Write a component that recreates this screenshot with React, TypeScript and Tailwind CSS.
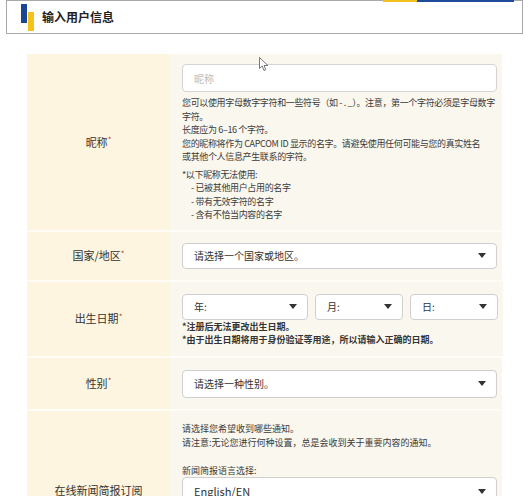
import React from 'react'

const font = { fontFamily: '"Noto Sans CJK SC", "Noto Sans", sans-serif' }

function Arrow() {
  return (
    <svg width="8" height="5" viewBox="0 0 8 5" className="shrink-0">
      <path d="M0 0 L8 0 L4 5 Z" fill="#333" />
    </svg>
  )
}

function Select({ text, className }: { text: string; className?: string }) {
  return (
    <div
      className={`flex items-center justify-between bg-white border border-[#cfcfcf] rounded-[4px] pl-[11px] pr-[10px] text-[10px] text-[#333] ${className ?? ''}`}
    >
      <span>{text}</span>
      <Arrow />
    </div>
  )
}

function Row({
  label,
  children,
  className,
}: {
  label: string
  children: React.ReactNode
  className?: string
}) {
  return (
    <div className={`flex border-b-2 border-[#fffcf6] ${className ?? ''}`}>
      <div className="w-[143px] shrink-0 bg-[#fdf5df] flex items-center justify-center text-[11px] text-[#333]">
        {label}
        <span className="text-[#c0392b] text-[8px] -mt-[4px]">*</span>
      </div>
      <div className="flex-1 bg-[#faf7ee] pl-[12px] pr-[5px]">{children}</div>
    </div>
  )
}

export default function App() {
  return (
    <div className="relative w-[529px] h-[496px] overflow-hidden bg-white" style={font}>
      {/* header */}
      <div className="relative mx-[6px] h-[34px] border border-[#a9a9a9] flex items-center">
        <div className="absolute -top-px left-[376px] w-[34px] h-[2px] bg-[#f1c21b]" />
        <div className="absolute -top-px left-[410px] w-[97px] h-[2px] bg-[#1e4b9b]" />
        <div className="relative w-[28px] h-full ml-[13px]">
          <div className="absolute left-[1px] top-[3px] w-[6px] h-[19px] bg-[#1b4595]" />
          <div className="absolute left-[8px] top-[11px] w-[6px] h-[19px] bg-[#f6c21a]" />
        </div>
        <h1 className="text-[12px] font-bold text-[#222] ml-[-6px]">输入用户信息</h1>
      </div>

      {/* form */}
      <div className="mt-[20px] ml-[27px] w-[475px] flex flex-col">
        <Row label="昵称">
          <div className="pt-[10px] pb-[8px]">
            <div className="h-[28px] bg-white border border-[#d4d4d4] rounded-[4px] flex items-center pl-[11px] text-[10px] text-[#bdbdbd]">
              昵称
            </div>
            <div className="mt-[4px] text-[9px] leading-[13.5px] tracking-[-0.35px] text-[#3a3a3a] whitespace-nowrap">
              <p>
                您可以使用字母数字字符和一些符号（如 - . _）。注意，第一个字符必须是字母数字
                <br />
                字符。
              </p>
              <p>长度应为 6–16 个字符。</p>
              <p>
                您的昵称将作为 CAPCOM ID 显示的名字。请避免使用任何可能与您的真实姓名
                <br />
                或其他个人信息产生联系的字符。
              </p>
              <p className="mt-[4px]">*以下昵称无法使用:</p>
              <p className="pl-[9px]">- 已被其他用户占用的名字</p>
              <p className="pl-[9px]">- 带有无效字符的名字</p>
              <p className="pl-[9px]">- 含有不恰当内容的名字</p>
            </div>
          </div>
        </Row>

        <Row label="国家/地区">
          <div className="py-[11px]">
            <Select text="请选择一个国家或地区。" className="h-[26px]" />
          </div>
        </Row>

        <Row label="出生日期">
          <div className="pt-[12px] pb-[9px]">
            <div className="flex gap-[7px]">
              <Select text="年:" className="h-[26px] w-[126px]" />
              <Select text="月:" className="h-[26px] w-[88px]" />
              <Select text="日:" className="h-[26px] w-[88px]" />
            </div>
            <div className="text-[9px] leading-[13.5px] font-bold text-[#333]">
              <p>*注册后无法更改出生日期。</p>
              <p>*由于出生日期将用于身份验证等用途，所以请输入正确的日期。</p>
            </div>
          </div>
        </Row>

        <Row label="性别">
          <div className="pt-[12px] pb-[11px]">
            <Select text="请选择一种性别。" className="h-[28px]" />
          </div>
        </Row>

        <div className="flex h-[160px]">
          <div className="w-[143px] shrink-0 bg-[#fdf5df] flex items-center justify-center text-[11px] text-[#333]">
            在线新闻简报订阅
          </div>
          <div className="flex-1 bg-[#faf7ee] pl-[12px] pr-[5px] pt-[11px]">
            <div className="text-[9px] leading-[14px] text-[#3a3a3a]">
              <p>请选择您希望收到哪些通知。</p>
              <p>请注意:无论您进行何种设置，总是会收到关于重要内容的通知。</p>
            </div>
            <p className="mt-[14px] text-[9px] leading-[13.5px] text-[#3a3a3a]">新闻简报语言选择:</p>
            <Select text="English/EN" className="h-[28px] text-[11px]" />
          </div>
        </div>
      </div>

      {/* mouse cursor */}
      <svg className="absolute left-[259px] top-[57px]" width="10" height="15" viewBox="0 0 10 15">
        <path d="M0.5 0.5 L0.5 11.5 L3.2 9 L5 13.5 L6.8 12.7 L5 8.5 L8.8 8.5 Z" fill="#fff" stroke="#555" strokeWidth="0.8" />
      </svg>
    </div>
  )
}
